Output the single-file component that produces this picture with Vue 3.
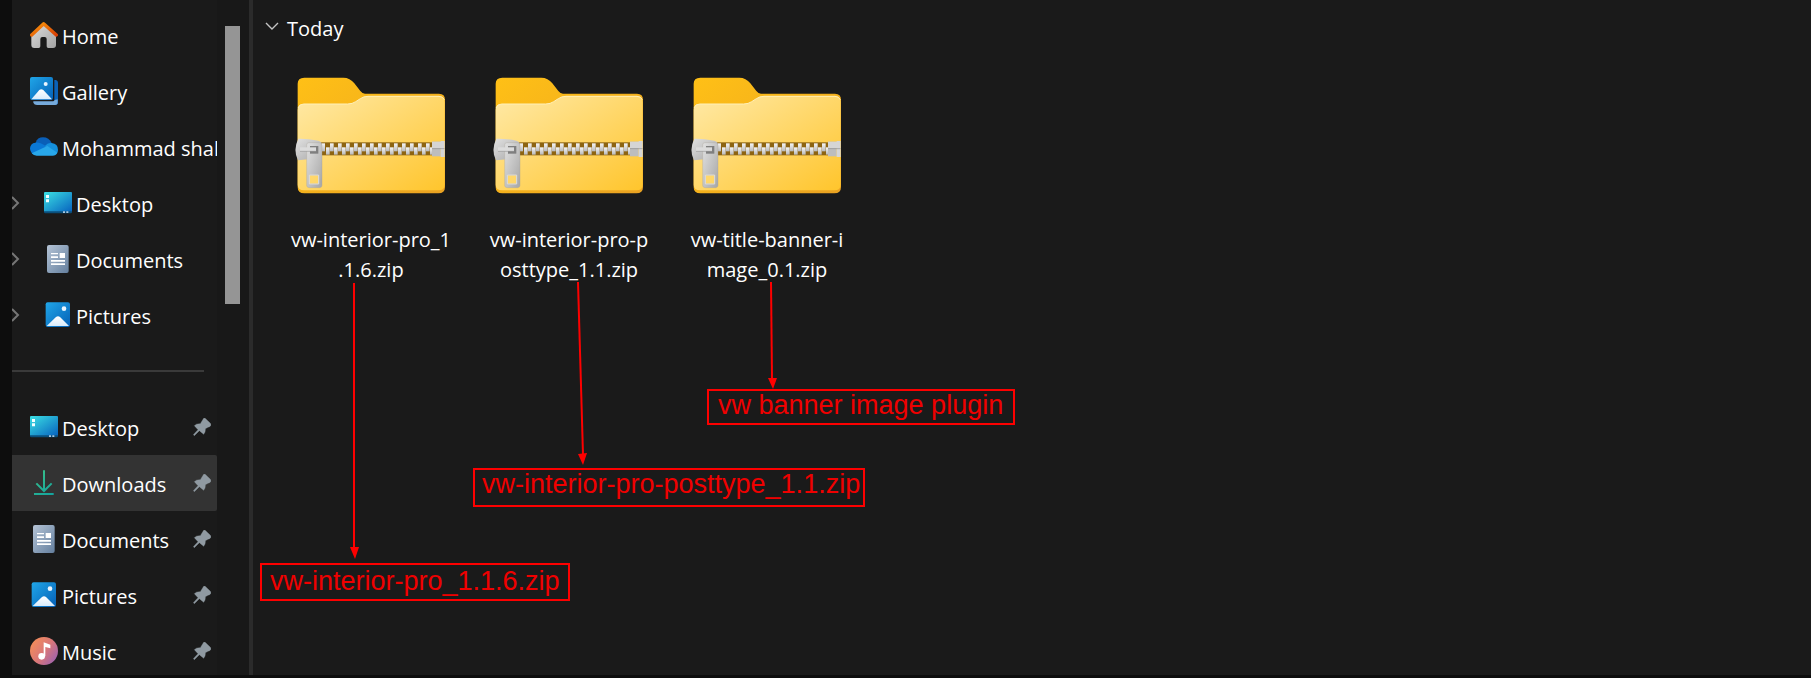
<script setup>
const places = [
  { label: 'Home', icon: 'home' },
  { label: 'Gallery', icon: 'gallery' },
  { label: 'Mohammad shal', icon: 'cloud' },
  { label: 'Desktop', icon: 'desktop', nested: true },
  { label: 'Documents', icon: 'documents', nested: true },
  { label: 'Pictures', icon: 'pictures', nested: true },
]

const pinned = [
  { label: 'Desktop', icon: 'desktop' },
  { label: 'Downloads', icon: 'downloads', active: true },
  { label: 'Documents', icon: 'documents' },
  { label: 'Pictures', icon: 'pictures' },
  { label: 'Music', icon: 'music' },
]

const files = [
  ['vw-interior-pro_1', '.1.6.zip'],
  ['vw-interior-pro-p', 'osttype_1.1.zip'],
  ['vw-title-banner-i', 'mage_0.1.zip'],
]

const teeth = Array.from({ length: 14 }, (_, i) => 228 + i * 24)
</script>

<template>
  <div class="window">
    <svg class="sprite" aria-hidden="true">
      <defs>
        <linearGradient id="g-roof" x1="0" y1="0" x2="1" y2="1">
          <stop offset="0" stop-color="#fb9a0c" /><stop offset="1" stop-color="#d83f05" />
        </linearGradient>
        <linearGradient id="g-wall" x1="0" y1="0" x2="1" y2="1">
          <stop offset="0" stop-color="#dedede" /><stop offset="1" stop-color="#a3a3a3" />
        </linearGradient>
        <linearGradient id="g-blue" x1="0" y1="0" x2="1" y2="1">
          <stop offset="0" stop-color="#20a6e8" /><stop offset="1" stop-color="#0560b6" />
        </linearGradient>
        <linearGradient id="g-hill" x1="0" y1="0" x2="0" y2="1">
          <stop offset="0" stop-color="#ffffff" /><stop offset="1" stop-color="#d8ebfb" />
        </linearGradient>
        <linearGradient id="g-desk" x1="0" y1="0" x2="1" y2="1">
          <stop offset="0" stop-color="#3be0e4" /><stop offset="1" stop-color="#0864bf" />
        </linearGradient>
        <linearGradient id="g-doc" x1="0" y1="0" x2="1" y2="1">
          <stop offset="0" stop-color="#b5c4d6" /><stop offset="1" stop-color="#647f9e" />
        </linearGradient>
        <linearGradient id="g-down" gradientUnits="userSpaceOnUse" x1="15" y1="5" x2="70" y2="80">
          <stop offset="0" stop-color="#3cc287" /><stop offset="1" stop-color="#12a3a0" />
        </linearGradient>
        <linearGradient id="g-music" x1="0" y1="0.2" x2="1" y2="0.9">
          <stop offset="0" stop-color="#f58e58" /><stop offset="0.5" stop-color="#d97779" /><stop offset="1" stop-color="#9660b6" />
        </linearGradient>
        <linearGradient id="g-back" x1="0" y1="0" x2="1" y2="1">
          <stop offset="0" stop-color="#ffc016" /><stop offset="1" stop-color="#e9a222" />
        </linearGradient>
        <linearGradient id="g-front" x1="0" y1="0" x2="1" y2="1">
          <stop offset="0" stop-color="#ffe9a6" /><stop offset="1" stop-color="#ffc52c" />
        </linearGradient>
        <linearGradient id="g-metal" x1="0" y1="0" x2="1" y2="1">
          <stop offset="0" stop-color="#e2e2e2" /><stop offset="1" stop-color="#a6a6a6" />
        </linearGradient>
        <linearGradient id="g-tooth" x1="0" y1="0" x2="0" y2="1">
          <stop offset="0" stop-color="#f6f6f6" /><stop offset="1" stop-color="#b9b9b9" />
        </linearGradient>
      </defs>

      <symbol id="i-home" viewBox="0 0 84 84">
        <path d="M4 40 41 8 78 40V72q0 9-9 9H55q-5 0-5-5V54q0-6-6-6H37q-6 0-6 6V76q0 5-5 5H13q-9 0-9-9Z" fill="url(#g-wall)" />
        <path d="M5 42 41 8 79 42" fill="none" stroke="url(#g-roof)" stroke-width="10" stroke-linecap="round" stroke-linejoin="round" />
      </symbol>

      <symbol id="i-gallery" viewBox="0 0 84 84">
        <path d="M73 9h5q6 2 6 8V76q0 8-8 8H66l7-14Z" fill="#0b62b8" />
        <path d="M10 73H69q4 0 5-4l9-2V76q0 8-8 8H21q-8 0-11-7Z" fill="#76aadb" />
        <rect width="69" height="69" rx="6" fill="url(#g-blue)" />
        <path d="M4 67 28 39q6-5 12 0L66 67Z" fill="url(#g-hill)" />
        <circle cx="47" cy="21" r="6" fill="#e9f5ff" />
      </symbol>

      <symbol id="i-cloud" viewBox="0 0 84 84">
        <path d="M17 29q5-16 22-16 18 0 26 17L46 52 16 34Z" fill="#0a5fb8" />
        <path d="M16 29q8-2 16 2L58 44 14 66Q0 60 0 46 1 31 16 29Z" fill="#0a78d6" />
        <path d="M65 30q19 2 19 21 0 6-4 11L44 40q8-11 21-10Z" fill="#1590dd" />
        <path d="M5 61 52 39 82 59q-4 9-14 9H20Q11 68 5 61Z" fill="#28a7ea" />
      </symbol>

      <symbol id="i-desktop" viewBox="0 0 84 84">
        <rect y="9" width="84" height="64" rx="4" fill="#0a4f7c" />
        <path d="M4 9H80q4 0 4 4V67H0V13q0-4 4-4Z" fill="url(#g-desk)" />
        <path d="M6 18h9v9H6ZM6 31h9v9H6Z" fill="#f3ffff" />
        <path d="M57 67h6v5h-6ZM67 67h6v5h-6Z" fill="#a9c8e4" />
      </symbol>

      <symbol id="i-documents" viewBox="0 0 84 84">
        <rect x="9" width="65" height="84" rx="6" fill="url(#g-doc)" />
        <path d="M21 24H42v4H21ZM21 34H42v5H21ZM47 24H63V39H47ZM21 45H63v5H21ZM21 55H63v5H21Z" fill="#fff" />
      </symbol>

      <symbol id="i-pictures" viewBox="0 0 84 84">
        <rect x="5" y="4" width="73" height="74" rx="6" fill="url(#g-blue)" />
        <path d="M8 75 36 48q6-5 12 0L75 75Z" fill="url(#g-hill)" />
        <circle cx="60" cy="23" r="7" fill="#e9f5ff" />
      </symbol>

      <symbol id="i-downloads" viewBox="0 0 84 84">
        <path d="M42 4V66M19 43 42 66 65 43M12 75H71" fill="none" stroke="url(#g-down)" stroke-width="6" />
      </symbol>

      <symbol id="i-music" viewBox="0 0 84 84">
        <circle cx="42" cy="42" r="42" fill="url(#g-music)" />
        <circle cx="35" cy="58" r="10" fill="#fff" />
        <path d="M41 16 61 23V34L46 30V58H41Z" fill="#fff" />
      </symbol>

      <symbol id="i-pin" viewBox="0 0 54 54">
        <path d="M32 1q3-2 6 1L52 16q3 3 1 7-2 3-8 5L37 32Q38 43 32 49L19 38 4 53 1 50 15 35 4 23Q10 16 22 17Z" fill="#909aa2" stroke="#909aa2" stroke-width="1" stroke-linejoin="round" />
      </symbol>

      <symbol id="i-zip" viewBox="135 233 450 351">
        <path d="M143 253q0-18 20-18H280q20 0 33 17l18 23q6 8 14 8H567q18 0 18 18V564q0 18-20 18H163q-20 0-20-18Z" fill="url(#g-back)" />
        <path d="M143 331q0-17 18-17H293q14 0 24-7l14-9q10-7 23-7H567q17 0 17 17V556q0 17-19 17H163q-20 0-20-17Z" fill="url(#g-front)" />
        <path d="M144 326q4-12 17-12H293q14 0 24-7l14-9q10-7 23-7H567q12 0 16 10" fill="none" stroke="#fff0b8" stroke-width="3" />
        <rect x="210" y="429" width="338" height="39" fill="#8d6412" />
        <rect x="216" y="432" width="9" height="24" fill="url(#g-tooth)" />
        <g v-for="x in teeth" :key="x" fill="url(#g-tooth)">
          <rect :x="x" y="444" width="11" height="22" />
          <rect v-if="x < 540" :x="x + 12" y="432" width="11" height="24" />
        </g>
        <path d="M546 427H572V471H546Z" fill="#bdbdbd" />
        <path d="M546 427H572V446H546ZM572 425H584V473H572Z" fill="#d5d5d5" />
        <path d="M546 448H584" stroke="#8f8f8f" stroke-width="2" />
        <path d="M145 418Q170 417 205 424q11 3 11 12v30q-1 9-12 11l-60 6q-16-32 1-65Z" fill="url(#g-metal)" />
        <path fill-rule="evenodd" d="M177 430H208q8 0 8 8V558q0 7-7 7H178q-8 0-8-7V437q0-7 7-7ZM178 527V554H206V527Z" fill="url(#g-metal)" stroke="#a7a095" stroke-width="1" />
        <path d="M178 527H206V554H178Z" fill="none" stroke="#dedede" stroke-width="3" />
        <path d="M180 440H205V463H180Z" fill="#7f7f7f" />
        <path d="M150 444H198V455H150Z" fill="#dcdcdc" />
        <path d="M150 456H198" stroke="#9a9a9a" stroke-width="2" />
      </symbol>
    </svg>

    <nav class="sidebar" aria-label="Folders">
      <div class="tree">
        <a v-for="p in places" :key="p.label" href="#" class="row" :class="{ nested: p.nested }">
          <svg v-if="p.nested" class="expand" viewBox="0 0 8 14" aria-hidden="true">
            <path d="M0 1 6 7 0 13" fill="none" stroke="#767676" stroke-width="2" />
          </svg>
          <svg class="icon" aria-hidden="true"><use :href="'#i-' + p.icon" /></svg>
          <span class="label">{{ p.label }}</span>
        </a>
        <div class="divider"><hr /></div>
        <a v-for="p in pinned" :key="p.label" href="#" class="row" :class="{ active: p.active }">
          <svg class="icon" aria-hidden="true"><use :href="'#i-' + p.icon" /></svg>
          <span class="label">{{ p.label }}</span>
          <svg class="pin" aria-hidden="true"><use href="#i-pin" /></svg>
        </a>
      </div>
      <div class="scroll"><div class="thumb"></div></div>
    </nav>

    <main class="content">
      <button class="group" type="button">
        <svg class="caret" viewBox="0 0 14 8" aria-hidden="true">
          <path d="M1 1 7 7 13 1" fill="none" stroke="#c4c4c4" stroke-width="1.4" />
        </svg>
        <span>Today</span>
      </button>
      <div class="files">
        <button v-for="f in files" :key="f[0]" class="file" type="button">
          <svg class="zip" aria-hidden="true"><use href="#i-zip" /></svg>
          <span class="name">{{ f[0] }}<br />{{ f[1] }}</span>
        </button>
      </div>
    </main>

    <svg class="arrows" aria-hidden="true">
      <g stroke="#fe0000" stroke-width="2">
        <path d="M354 283V549" />
        <path d="M578 282 583 455" />
        <path d="M771 282 772 380" />
      </g>
      <g fill="#fe0000">
        <path d="M350 547H359L355 559Z" />
        <path d="M578 454 587 453 583 465Z" />
        <path d="M768 378H777L773 389Z" />
      </g>
    </svg>
    <div class="note note-theme">vw-interior-pro_1.1.6.zip</div>
    <div class="note note-posttype">vw-interior-pro-posttype_1.1.zip</div>
    <div class="note note-banner">vw banner image plugin</div>
  </div>
</template>

<style>
body {
  margin: 0;
  background: #0e0c0e;
}
</style>

<style scoped>
.window {
  position: relative;
  box-sizing: border-box;
  display: flex;
  height: 100vh;
  padding: 0 0 3px 12px;
  overflow: hidden;
  background: #0d0d0d;
  color: #fff;
  font-family: "Open Sans", "Noto Sans", sans-serif;
  font-size: 20px;
}

.sprite {
  position: absolute;
  width: 0;
  height: 0;
}

.sidebar {
  display: flex;
  flex: none;
  width: 237px;
  overflow: hidden;
  background: #181818;
}

.tree {
  flex: none;
  width: 205px;
  padding-top: 7px;
  overflow: hidden;
  background: #1a1a1a;
}

.row {
  position: relative;
  box-sizing: border-box;
  display: flex;
  align-items: center;
  height: 56px;
  padding-left: 18px;
  color: inherit;
  text-decoration: none;
}

.row.nested {
  padding-left: 32px;
}

.row.active {
  background: #333;
  border-radius: 0 2px 2px 0;
}

.expand {
  position: absolute;
  left: 0;
  width: 8px;
  height: 14px;
}

.icon {
  flex: none;
  width: 28px;
  height: 28px;
}

.label {
  flex: 1;
  padding: 2px 0 0 4px;
  overflow: hidden;
  white-space: nowrap;
}

.pin {
  flex: none;
  width: 18px;
  height: 18px;
  margin-right: 6px;
}

.divider {
  display: flex;
  align-items: center;
  height: 56px;
  padding-right: 13px;
}

.divider hr {
  flex: 1;
  height: 2px;
  margin: 0;
  border: 0;
  background: #3a3a3a;
}

.scroll {
  padding: 26px 0 0 8px;
}

.thumb {
  width: 15px;
  height: 278px;
  background: #959595;
}

.content {
  flex: 1;
  min-width: 0;
  border-left: 4px solid #2b2b2b;
  background: #1a1a1a;
}

.group,
.file {
  border: 0;
  background: none;
  color: inherit;
  font: inherit;
}

.group {
  display: flex;
  align-items: center;
  gap: 8px;
  height: 30px;
  margin: 13px 0 0 12px;
  padding: 0;
}

.caret {
  width: 14px;
  height: 8px;
  margin-bottom: 4px;
}

.files {
  display: flex;
  flex-wrap: wrap;
  gap: 18px;
  padding: 34px 0 0 27px;
}

.file {
  display: flex;
  flex-direction: column;
  align-items: center;
  gap: 31px;
  width: 180px;
  padding: 0;
}

.zip {
  width: 150px;
  height: 117px;
}

.name {
  padding-left: 2px;
  line-height: 30px;
  text-align: center;
}

.arrows {
  position: absolute;
  top: 0;
  left: 0;
  width: 100%;
  height: 100%;
  pointer-events: none;
}

.note {
  position: absolute;
  border: 2px solid #fe0000;
  padding: 0 8px 7px 8px;
  color: #f00000;
  font-family: "Liberation Sans", Arial, sans-serif;
  font-size: 27px;
  line-height: 28px;
  white-space: nowrap;
}

.note-theme {
  top: 563px;
  left: 260px;
  padding-top: 2px;
  padding-bottom: 4px;
}

.note-posttype {
  top: 468px;
  left: 473px;
  padding: 0 3px 7px 7px;
}

.note-banner {
  top: 389px;
  left: 707px;
  padding: 0 10px 4px 9px;
}
</style>
